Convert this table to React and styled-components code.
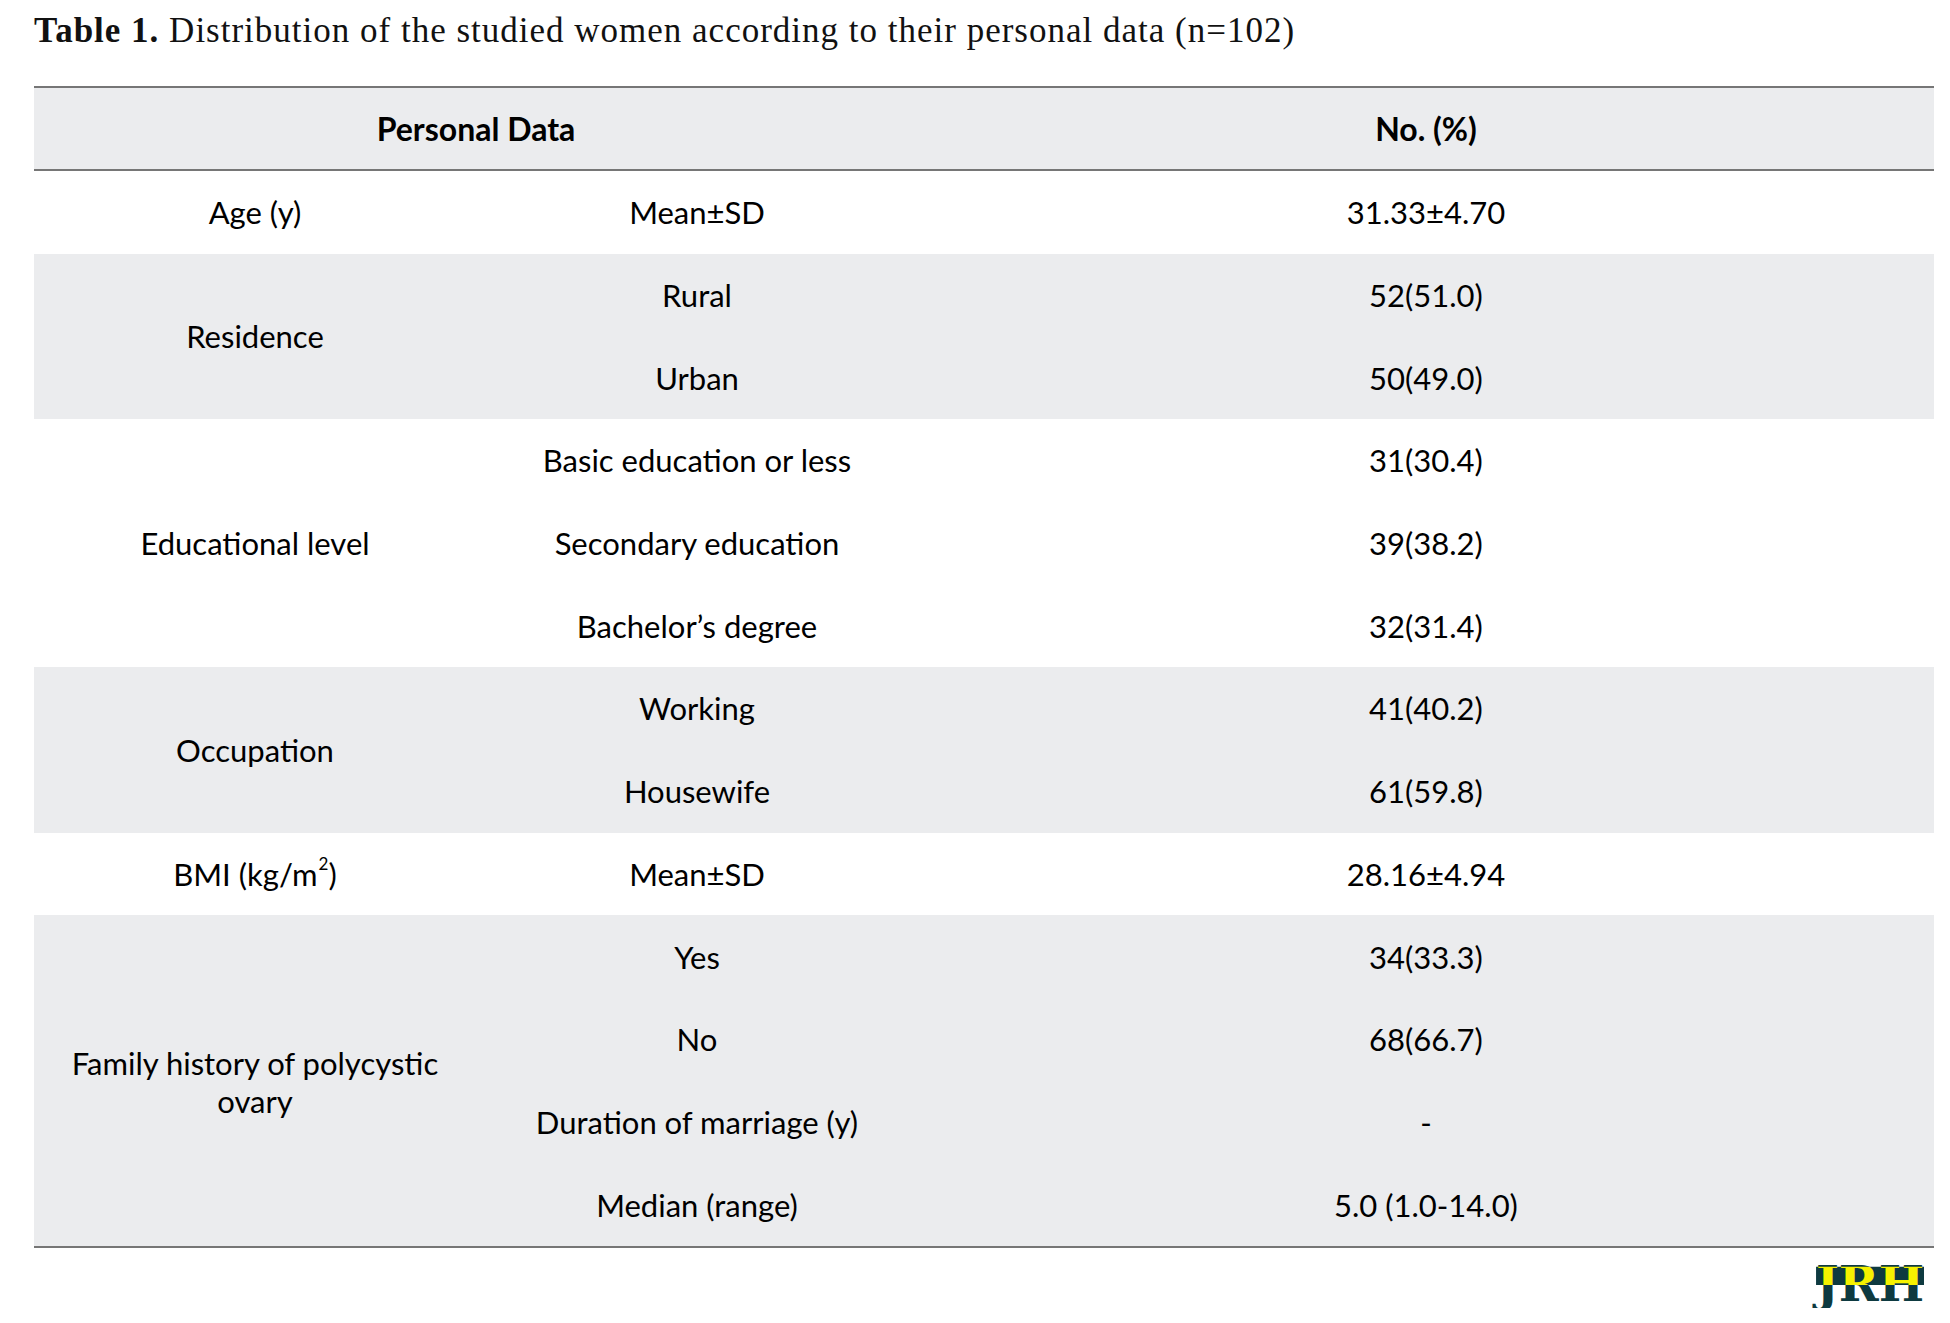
import React from 'react';
import styled, { createGlobalStyle } from 'styled-components';

const GlobalStyle = createGlobalStyle`
  html, body {
    margin: 0;
    padding: 0;
    background: #ffffff;
  }
  body {
    font-family: Lato, "Liberation Sans", sans-serif;
    color: #000;
  }
`;

const Page = styled.div`
  width: 1950px;
  padding: 0 16px 0 34px;
  box-sizing: border-box;
`;

const Caption = styled.div`
  font-family: "Liberation Serif", serif;
  font-size: 35px;
  line-height: 40px;
  padding-top: 11px;
  letter-spacing: 1px;
  color: #111;
  b {
    font-weight: 700;
  }
`;

const Table = styled.div`
  margin-top: 35px;
  width: 1900px;
  border-top: 2px solid #767676;
  border-bottom: 2px solid #767676;
`;

const HeaderRow = styled.div`
  display: grid;
  grid-template-columns: 884px 1016px;
  height: 81px;
  background: #ebecee;
  border-bottom: 2px solid #767676;
  font-weight: 700;
  font-size: 32px;
`;

const Cell = styled.div`
  display: flex;
  align-items: center;
  justify-content: center;
  text-align: center;
  line-height: 38px;
  padding-top: ${(p) => (p.$nudge ? p.$nudge : 0)}px;
  box-sizing: border-box;
`;

const Group = styled.div`
  display: flex;
  background: ${(p) => (p.$shaded ? '#ebecee' : '#ffffff')};
  font-size: 31px;
`;

const Label = styled(Cell)`
  width: 442px;
  flex: none;
`;

const SubRows = styled.div`
  flex: 1;
  display: flex;
  flex-direction: column;
`;

const SubRow = styled.div`
  display: grid;
  grid-template-columns: 442px 1016px;
  height: 82.7px;
`;

const Sup = styled.span`
  font-size: 0.55em;
  line-height: 0;
  position: relative;
  top: -0.6em;
  margin-left: 1px;
`;

const LogoRow = styled.div`
  display: flex;
  justify-content: flex-end;
  width: 1900px;
  padding-right: 10px;
  box-sizing: border-box;
  margin-top: 12px;
`;

const Logo = styled.div`
  position: relative;
  font-family: "DejaVu Serif", serif;
  font-weight: 700;
  font-size: 48px;
  line-height: 1;
  color: #0e3a40;
`;

const LogoBand = styled.div`
  position: absolute;
  inset: 0;
  color: #f6f200;
  background: #0e3a40;
  clip-path: inset(14% 0 48% 0);
`;

const groups = [
  { label: 'Age (y)', rows: [['Mean±SD', '31.33±4.70']] },
  {
    label: 'Residence',
    shaded: true,
    rows: [
      ['Rural', '52(51.0)'],
      ['Urban', '50(49.0)'],
    ],
  },
  {
    label: 'Educational level',
    rows: [
      ['Basic education or less', '31(30.4)'],
      ['Secondary education', '39(38.2)'],
      ['Bachelor’s degree', '32(31.4)'],
    ],
  },
  {
    label: 'Occupation',
    shaded: true,
    rows: [
      ['Working', '41(40.2)'],
      ['Housewife', '61(59.8)'],
    ],
  },
  {
    label: (
      <>
        BMI (kg/m<Sup>2</Sup>)
      </>
    ),
    rows: [['Mean±SD', '28.16±4.94']],
  },
  {
    label: (
      <>
        Family history of polycystic
        <br />
        ovary
      </>
    ),
    shaded: true,
    nudge: 2,
    rows: [
      ['Yes', '34(33.3)'],
      ['No', '68(66.7)'],
      ['Duration of marriage (y)', '-'],
      ['Median (range)', '5.0 (1.0-14.0)'],
    ],
  },
];

export default function App() {
  return (
    <Page>
      <GlobalStyle />
      <Caption>
        <b>Table 1.</b> Distribution of the studied women according to their personal data (n=102)
      </Caption>
      <Table>
        <HeaderRow>
          <Cell>Personal Data</Cell>
          <Cell>No. (%)</Cell>
        </HeaderRow>
        {groups.map((g, i) => (
          <Group key={i} $shaded={g.shaded}>
            <Label $nudge={g.nudge}>{g.label}</Label>
            <SubRows>
              {g.rows.map(([name, value]) => (
                <SubRow key={name}>
                  <Cell>{name}</Cell>
                  <Cell>{value}</Cell>
                </SubRow>
              ))}
            </SubRows>
          </Group>
        ))}
      </Table>
      <LogoRow>
        <Logo>
          JRH
          <LogoBand>JRH</LogoBand>
        </Logo>
      </LogoRow>
    </Page>
  );
}
